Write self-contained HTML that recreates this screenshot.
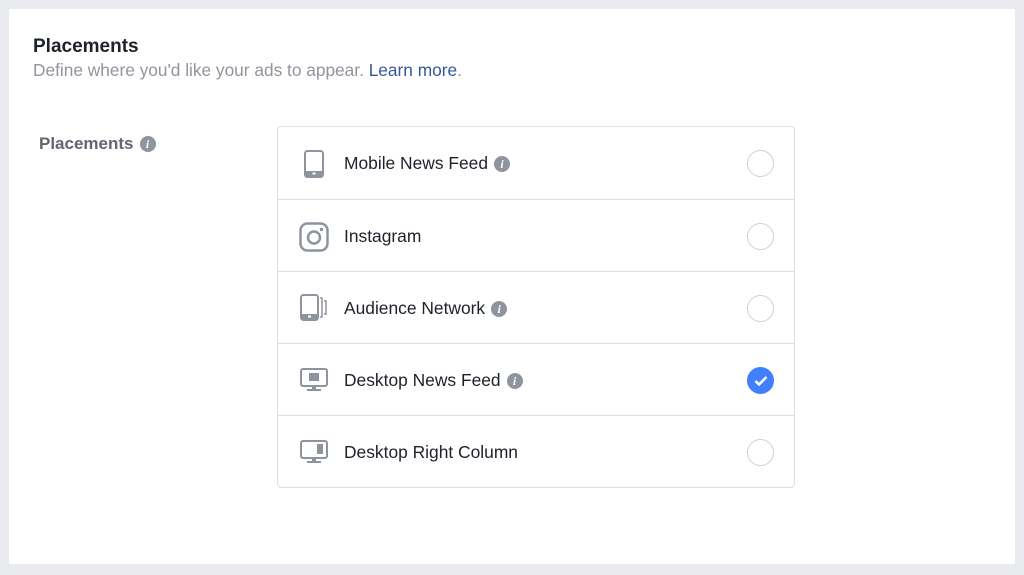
<!DOCTYPE html>
<html><head><style>
*{margin:0;padding:0;box-sizing:border-box}
body{width:1024px;height:575px;background:#e9ebee;font-family:"Liberation Sans",Helvetica,Arial,sans-serif;position:relative;overflow:hidden}
.panel{position:absolute;left:9px;top:9px;width:1006px;height:555px;background:#fff}
.t{position:absolute;left:33px;top:36px;font-size:19px;font-weight:bold;color:#1d2129}
.s{position:absolute;left:33px;top:60px;font-size:17.3px;color:#90949c}
.s a{color:#365899;text-decoration:none}
.lab{position:absolute;left:39px;top:134px;font-size:17px;font-weight:bold;color:#606770}
.info{display:inline-block;width:16px;height:16px;border-radius:50%;background:#8d949e;color:#fff;font:italic bold 12px "Liberation Serif",serif;text-align:center;line-height:16px;vertical-align:1px;margin-left:6px}
.box{position:absolute;left:277px;top:126px;width:518px;height:362px;border:1px solid #dddfe2;border-radius:4px}
.row{position:absolute;left:0;width:516px;height:72px;border-top:1px solid #dddfe2}
.row:first-child{border-top:none}
.row .txt{position:absolute;left:66px;top:26px;font-size:17.4px;color:#1d2129}
.row svg{position:absolute}
.radio{position:absolute;left:469px;top:23px;width:27px;height:27px;border-radius:50%;border:1px solid #ccd0d5;background:#fff}
.radio.on{background:#4080ff;border-color:#4080ff}
</style></head><body>
<div class="panel"></div>
<div class="t">Placements</div>
<div class="s">Define where you'd like your ads to appear. <a>Learn more</a>.</div>
<div class="lab">Placements<span class="info">i</span></div>
<div class="box">
 <div class="row" style="top:0">
  <svg style="left:26px;top:23px" width="20" height="28" viewBox="0 0 20 28"><rect x="1" y="1" width="18" height="26" rx="2.5" fill="none" stroke="#8d949e" stroke-width="2"/><rect x="2" y="21" width="16" height="5" fill="#8d949e"/><rect x="8.5" y="22.5" width="3" height="2" fill="#fff"/></svg>
  <div class="txt">Mobile News Feed<span class="info">i</span></div><div class="radio"></div></div>
 <div class="row" style="top:72px">
  <svg style="left:21px;top:22px" width="30" height="30" viewBox="0 0 30 30"><rect x="1.5" y="1.5" width="27" height="27" rx="7" fill="none" stroke="#8d949e" stroke-width="2.5"/><circle cx="15" cy="15.5" r="6" fill="none" stroke="#8d949e" stroke-width="2.5"/><circle cx="22.5" cy="7.5" r="1.7" fill="#8d949e"/></svg>
  <div class="txt">Instagram</div><div class="radio"></div></div>
 <div class="row" style="top:144px">
  <svg style="left:22px;top:22px" width="28" height="28" viewBox="0 0 28 28"><rect x="1" y="1" width="17" height="25" rx="2.5" fill="none" stroke="#8d949e" stroke-width="2"/><rect x="2" y="20" width="15" height="5" fill="#8d949e"/><rect x="8" y="21.5" width="3" height="2" fill="#fff"/><path d="M20 4h2v19h-2M24 7h2v13h-2" fill="none" stroke="#8d949e" stroke-width="1.5"/></svg>
  <div class="txt">Audience Network<span class="info">i</span></div><div class="radio"></div></div>
 <div class="row" style="top:216px">
  <svg style="left:22px;top:24px" width="28" height="24" viewBox="0 0 28 24"><rect x="1" y="1" width="26" height="17" rx="2" fill="none" stroke="#8d949e" stroke-width="2"/><rect x="9" y="5" width="10" height="8" fill="#8d949e"/><rect x="12" y="18" width="4" height="3" fill="#8d949e"/><rect x="7" y="21" width="14" height="2" fill="#8d949e"/></svg>
  <div class="txt">Desktop News Feed<span class="info">i</span></div>
  <div class="radio on"><svg style="left:6px;top:7px" width="14" height="12" viewBox="0 0 14 12"><path d="M1.5 6l3.5 3.5 7.5-7.5" fill="none" stroke="#fff" stroke-width="2.5"/></svg></div></div>
 <div class="row" style="top:288px">
  <svg style="left:22px;top:24px" width="28" height="24" viewBox="0 0 28 24"><rect x="1" y="1" width="26" height="17" rx="2" fill="none" stroke="#8d949e" stroke-width="2"/><rect x="17" y="4" width="6" height="10" fill="#8d949e"/><rect x="12" y="18" width="4" height="3" fill="#8d949e"/><rect x="7" y="21" width="14" height="2" fill="#8d949e"/></svg>
  <div class="txt">Desktop Right Column</div><div class="radio"></div></div>
</div>
</body></html>
